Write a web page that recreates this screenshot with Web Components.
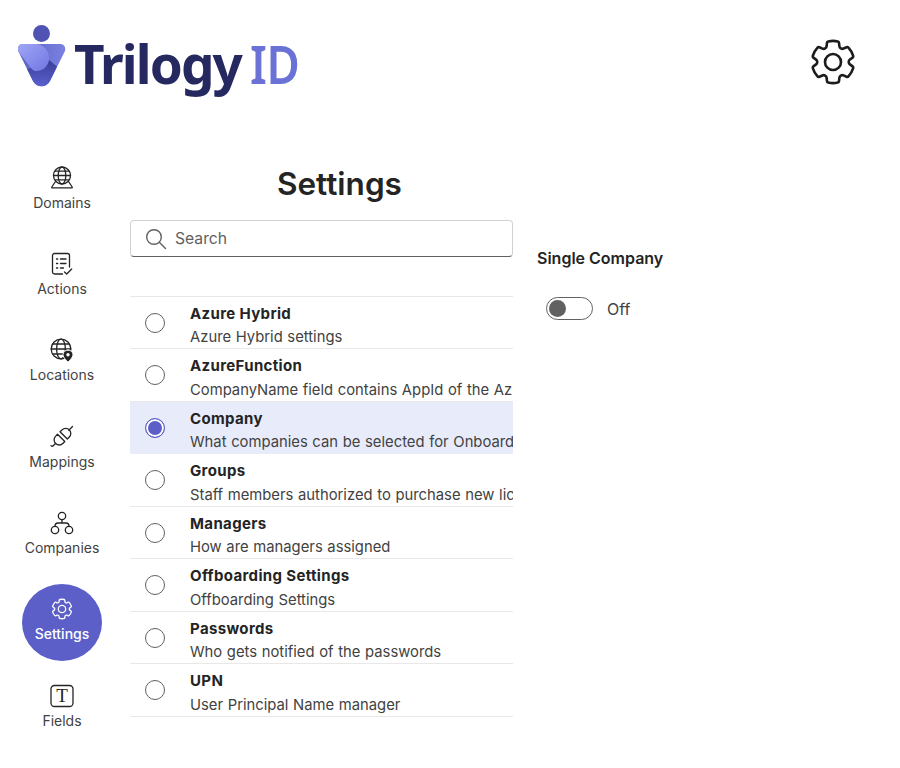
<!DOCTYPE html>
<html>
<head>
<meta charset="utf-8">
<title>Settings</title>
<style>
  html, body { margin: 0; padding: 0; background: #fff; }
  body { font-family: Inter, "Liberation Sans", sans-serif; color: #242424; width: 900px; height: 768px; overflow: hidden; }
  .page { display: flex; align-items: flex-start; }
</style>
</head>
<body>
<app-header></app-header>
<div class="page">
  <side-nav>
    <nav-item label="Domains" icon="domains"></nav-item>
    <nav-item label="Actions" icon="actions"></nav-item>
    <nav-item label="Locations" icon="locations"></nav-item>
    <nav-item label="Mappings" icon="mappings"></nav-item>
    <nav-item label="Companies" icon="companies"></nav-item>
    <nav-item label="Settings" icon="settings" active></nav-item>
    <nav-item label="Fields" icon="fields"></nav-item>
  </side-nav>
  <settings-list>
    <setting-row name="Azure Hybrid" desc="Azure Hybrid settings"></setting-row>
    <setting-row name="AzureFunction" desc="CompanyName field contains AppId of the Azure Function"></setting-row>
    <setting-row name="Company" desc="What companies can be selected for Onboarding" selected></setting-row>
    <setting-row name="Groups" desc="Staff members authorized to purchase new licenses"></setting-row>
    <setting-row name="Managers" desc="How are managers assigned"></setting-row>
    <setting-row name="Offboarding Settings" desc="Offboarding Settings"></setting-row>
    <setting-row name="Passwords" desc="Who gets notified of the passwords"></setting-row>
    <setting-row name="UPN" desc="User Principal Name manager"></setting-row>
  </settings-list>
  <detail-panel title="Single Company"></detail-panel>
</div>

<script>
// six lobed gear outline, stroked rather than filled
const gearPath = 'M12 2.25c.74 0 1.47.09 2.19.25.31.07.54.33.58.65l.17 1.53a1.38 1.38 0 0 0 1.93 1.11l1.4-.61a.75.75 0 0 1 .85.17 9.8 9.8 0 0 1 2.2 3.79.75.75 0 0 1-.27.83l-1.24.91a1.38 1.38 0 0 0 0 2.23l1.24.91c.26.19.37.52.27.83a9.8 9.8 0 0 1-2.2 3.79.75.75 0 0 1-.85.18l-1.4-.62a1.38 1.38 0 0 0-1.93 1.11l-.17 1.53a.75.75 0 0 1-.57.65 9.5 9.5 0 0 1-4.41 0 .75.75 0 0 1-.57-.65l-.17-1.52a1.38 1.38 0 0 0-1.93-1.11l-1.4.62a.75.75 0 0 1-.85-.18 9.8 9.8 0 0 1-2.2-3.8.75.75 0 0 1 .27-.82l1.24-.92a1.38 1.38 0 0 0 0-2.22l-1.24-.92a.75.75 0 0 1-.27-.82 9.8 9.8 0 0 1 2.2-3.8.75.75 0 0 1 .85-.17l1.4.62a1.38 1.38 0 0 0 1.93-1.12l.17-1.53a.75.75 0 0 1 .58-.65c.72-.16 1.45-.25 2.2-.25z';

const icons = {
  domains: `<circle cx="12" cy="9.500" r="8.500"/><ellipse cx="12" cy="9.500" rx="3.800" ry="8.500"/><path d="M3.500 9.500h17M5 5.200h14M5 13.800h14"/><path d="M5.500 15.500 1.800 21a.6.6 0 0 0 .5.9h19.400a.6.6 0 0 0 .5-.9l-3.700-5.500"/>`,
  actions: `<path d="M12.500 22H4.500a2 2 0 0 1-2-2V3.500a2 2 0 0 1 2-2h13a2 2 0 0 1 2 2V15"/><path d="M6.500 7h1.200M6.500 11.500h1.200M6.500 16h1.200M10.500 7H16M10.500 11.500H16M10.500 16h3"/><path d="m14.500 20 2.200 2 5-5"/>`,
  locations: `<circle cx="11" cy="11" r="9.800"/><ellipse cx="11" cy="11" rx="4.400" ry="9.800"/><path d="M1.200 11h19.600M2.800 6h16.400M2.800 16h10"/><path d="M18 12c-2.900 0-5 2.100-5 4.700 0 3 5 7.300 5 7.300s5-4.300 5-7.300c0-2.600-2.100-4.700-5-4.700z" fill="#242424" stroke="#fff" stroke-width="1"/><circle cx="18" cy="16.800" r="1.700" fill="#fff" stroke="none"/>`,
  mappings: `<path d="m7.500 9.200 7.300 7.300-2 2a5 5 0 0 1-7.100 0 5 5 0 0 1-.2-7.100z"/><path d="m10 6.700 7.300 7.300 2-2a5 5 0 0 0 0-7.100 5 5 0 0 0-7.100-.2z"/><path d="m18.800 5.200 3.700-3.700"/><path d="m5.500 18.500-2.500 2.500a1.400 1.400 0 0 1-2-.4"/>`,
  companies: `<circle cx="12" cy="5" r="3.700"/><circle cx="5" cy="19" r="3.700"/><circle cx="19" cy="19" r="3.700"/><path d="M12 8.700v3.300M5 15.300c0-2 1-3.300 3-3.300h8c2 0 3 1.300 3 3.300"/>`,
  settings: `<path d="${gearPath}"/><circle cx="12" cy="12" r="3.700"/>`,
  fields: `<rect x="1" y="1.500" width="22" height="21" rx="3.500"/>`
};

class AppHeader extends HTMLElement {
  constructor() {
    super();
    this.attachShadow({ mode: 'open' });
    this.shadowRoot.innerHTML = `
      <style>
        :host { display: block; height: 130px; }
        .bar { display: flex; justify-content: space-between; padding: 25px 41px 0 18px; }
        .logo { display: flex; align-items: flex-start; }
        .mark { margin-right: 7px; }
        .word {
          font-family: "Noto Sans", "Open Sans", sans-serif;
          font-weight: 700;
          font-size: 53px;
          line-height: 53px;
          margin-top: 12px;
          letter-spacing: -1.900px;
          color: #26295f;
          white-space: nowrap;
        }
        .word span {
          display: inline-block;
          color: #6a72d6;
          margin-left: 9px;
          letter-spacing: -0.5px;
          font-weight: 600;
          transform: scaleX(.86);
          transform-origin: left center;
        }
        .gear { margin-top: 11px; display: block; }
      </style>
      <div class="bar">
        <div class="logo">
          <svg class="mark" width="49" height="68" viewBox="0 0 49 68">
            <defs>
              <linearGradient id="a" x1="0" y1="0" x2="1" y2="1"><stop offset="0" stop-color="#a0a6f5"/><stop offset="1" stop-color="#7076e2"/></linearGradient>
              <linearGradient id="b" x1="0" y1="0" x2="0" y2="1"><stop offset="0" stop-color="#3a3e96"/><stop offset="1" stop-color="#5a60cf"/></linearGradient>
              <linearGradient id="c" x1="0" y1="0" x2="1" y2="0"><stop offset="0" stop-color="#5a60c0"/><stop offset="1" stop-color="#7b81e0"/></linearGradient>
            </defs>
            <circle cx="23.500" cy="8.500" r="8.500" fill="#4f54b4"/>
            <path d="M5 19h37c4.500 0 6.500 4 4.500 8L32 56c-3.500 7-13.500 7-17 0L.7 27C-1.300 23 .5 19 5 19z" fill="url(#c)"/>
            <path d="M5 19h12c8 0 14 6 14 14 0 7-5 12-12 13-3 .4-5-.6-6-2.800L.7 27C-1.300 23 .5 19 5 19z" fill="url(#a)"/>
            <path d="M13 43c1.500 2.500 4 3.500 7 3 6-1 10-5 11-11l8 6.500L32 56c-3.500 7-13.500 7-17 0l-6-12z" fill="url(#b)"/>
          </svg>
          <div class="word">Trilogy<span>ID</span></div>
        </div>
        <svg class="gear" width="52" height="52" viewBox="0 0 24 24" fill="none" stroke="#1c1c1c" stroke-width="1.200" stroke-linejoin="round">
          <path d="${gearPath}"/><circle cx="12" cy="12" r="3.700"/>
        </svg>
      </div>
    `;
  }
}

class SideNav extends HTMLElement {
  constructor() {
    super();
    this.attachShadow({ mode: 'open' });
    this.shadowRoot.innerHTML = `
      <style>
        :host { display: flex; flex-direction: column; width: 130px; flex: none; padding: 22px 0 0 22px; box-sizing: border-box; }
      </style>
      <slot></slot>
    `;
  }
}

class NavItem extends HTMLElement {
  constructor() {
    super();
    this.attachShadow({ mode: 'open' });
  }

  connectedCallback() {
    const key = this.getAttribute('icon');
    const extra = key === 'fields'
      ? '<text x="12" y="18.300" text-anchor="middle" font-family="Liberation Serif, serif" font-size="19" fill="#242424" stroke="none">T</text>'
      : '';
    this.shadowRoot.innerHTML = `
      <style>
        :host { display: block; width: 80px; height: 86.400px; }
        .item {
          box-sizing: border-box;
          width: 80px;
          height: 77px;
          padding-bottom: 4px;
          display: flex;
          flex-direction: column;
          align-items: center;
          justify-content: center;
          gap: 4px;
          color: #424242;
          font-size: 14px;
          line-height: 18px;
          white-space: nowrap;
        }
        svg { display: block; fill: none; stroke: #242424; stroke-width: 1.300; stroke-linecap: round; stroke-linejoin: round; }
        :host([active]) .item { background: #5b5fc7; color: #fff; border-radius: 50%; font-weight: 500; }
        :host([active]) svg { stroke: #fff; }
      </style>
      <div class="item">
        <svg width="24" height="24" viewBox="0 0 24 24">${icons[key]}${extra}</svg>
        <span>${this.getAttribute('label')}</span>
      </div>
    `;
  }
}

class SettingsList extends HTMLElement {
  constructor() {
    super();
    this.attachShadow({ mode: 'open' });
    this.shadowRoot.innerHTML = `
      <style>
        :host { display: block; width: 383px; flex: none; }
        h1 { margin: 32px 0 0 147px; font-size: 31.500px; line-height: 44px; font-weight: 600; color: #242424; white-space: nowrap; }
        .search {
          box-sizing: border-box;
          height: 37px;
          margin-top: 14px;
          display: flex;
          align-items: center;
          gap: 8px;
          padding-left: 14px;
          border: 1px solid #d1d1d1;
          border-bottom: 1.500px solid #616161;
          border-radius: 4px;
          color: #616161;
          font-size: 15.700px;
        }
        .rows { margin-top: 38.500px; border-top: 1.500px solid #e8e8e8; }
      </style>
      <h1>Settings</h1>
      <div class="search">
        <svg width="22" height="22" viewBox="0 0 22 22" fill="none" stroke="#616161" stroke-width="1.400" stroke-linecap="round">
          <circle cx="9" cy="9" r="7.300"/><path d="m14.300 14.300 6.200 6.200"/>
        </svg>
        <span>Search</span>
      </div>
      <div class="rows"><slot></slot></div>
    `;
  }
}

class SettingRow extends HTMLElement {
  constructor() {
    super();
    this.attachShadow({ mode: 'open' });
  }

  connectedCallback() {
    this.shadowRoot.innerHTML = `
      <style>
        :host { display: block; }
        .row {
          box-sizing: border-box;
          height: 52.500px;
          display: flex;
          overflow: hidden;
          border-bottom: 1.500px solid #e8e8e8;
        }
        :host([selected]) .row { background: #e8ebfa; border-bottom-color: #e8ebfa; }
        .radio {
          box-sizing: border-box;
          flex: none;
          width: 20px;
          height: 20px;
          margin: 16px 25px 0 15px;
          border-radius: 50%;
          border: 1.300px solid #616161;
          background: #fff;
        }
        :host([selected]) .radio { border-color: #5b5fc7; background: #5b5fc7; box-shadow: inset 0 0 0 2px #fff; }
        .text { padding-top: 7.400px; white-space: nowrap; min-width: 0; }
        .name { font-size: 15px; line-height: 20px; font-weight: 700; letter-spacing: .35px; color: #242424; }
        .desc { font-size: 14.800px; line-height: 20px; margin-top: 3.600px; word-spacing: .5px; color: #424242; }
      </style>
      <div class="row">
        <div class="radio"></div>
        <div class="text">
          <div class="name">${this.getAttribute('name')}</div>
          <div class="desc">${this.getAttribute('desc')}</div>
        </div>
      </div>
    `;
  }
}

class DetailPanel extends HTMLElement {
  constructor() {
    super();
    this.attachShadow({ mode: 'open' });
  }

  connectedCallback() {
    this.shadowRoot.innerHTML = `
      <style>
        :host { display: block; margin-left: 24px; padding-top: 118px; }
        .title { font-size: 16px; line-height: 20px; font-weight: 600; color: #242424; }
        .toggle { display: flex; align-items: center; gap: 14px; margin: 29px 0 0 9px; font-size: 16px; color: #424242; }
        .track {
          box-sizing: border-box;
          width: 47px;
          height: 23px;
          border: 1px solid #616161;
          border-radius: 12px;
          padding: 2px;
        }
        .knob { width: 17px; height: 17px; border-radius: 50%; background: #616161; }
      </style>
      <div class="title">${this.getAttribute('title')}</div>
      <div class="toggle">
        <div class="track"><div class="knob"></div></div>
        <span>Off</span>
      </div>
    `;
  }
}

customElements.define('app-header', AppHeader);
customElements.define('side-nav', SideNav);
customElements.define('nav-item', NavItem);
customElements.define('settings-list', SettingsList);
customElements.define('setting-row', SettingRow);
customElements.define('detail-panel', DetailPanel);
</script>
</body>
</html>
